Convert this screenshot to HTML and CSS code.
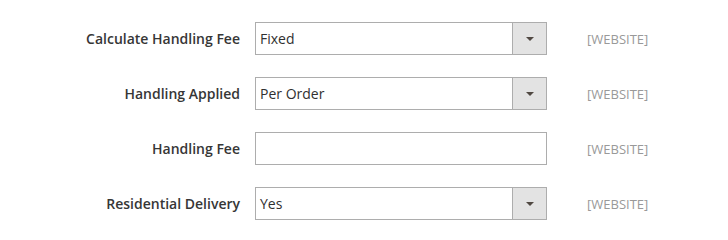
FILE: index.html
```html
<!DOCTYPE html>
<html>
<head>
<meta charset="utf-8">
<link rel="stylesheet" href="styles.css">
</head>
<body>
<div class="form">
  <div class="row">
    <label class="label">Calculate Handling Fee</label>
    <div class="control select"><span class="value">Fixed</span><span class="btn"><span class="arrow"></span></span></div>
    <span class="scope">[WEBSITE]</span>
  </div>
  <div class="row">
    <label class="label">Handling Applied</label>
    <div class="control select"><span class="value">Per Order</span><span class="btn"><span class="arrow"></span></span></div>
    <span class="scope">[WEBSITE]</span>
  </div>
  <div class="row">
    <label class="label">Handling Fee</label>
    <div class="control"><span class="value"></span></div>
    <span class="scope">[WEBSITE]</span>
  </div>
  <div class="row">
    <label class="label">Residential Delivery</label>
    <div class="control select"><span class="value">Yes</span><span class="btn"><span class="arrow"></span></span></div>
    <span class="scope">[WEBSITE]</span>
  </div>
</div>
</body>
</html>
```
FILE: styles.css
```css
html, body {
  margin: 0;
  padding: 0;
  background: #fff;
}
body {
  font-family: "Open Sans", sans-serif;
  color: #303030;
}
.form {
  padding-top: 22px;
  display: flex;
  flex-direction: column;
  gap: 22px;
}
.row {
  display: flex;
  align-items: center;
  height: 33px;
}
.label {
  text-align: right;
  font-size: 14px;
  font-weight: 600;
  color: #363636;
  padding-right: 15px;
  box-sizing: border-box;
  width: 255px;
}
.control {
  width: 292px;
  height: 33px;
  box-sizing: border-box;
  border: 1px solid #adadad;
  background: #fff;
  display: flex;
  align-items: stretch;
}
.value {
  flex: 1;
  font-size: 14px;
  line-height: 31px;
  padding-left: 4px;
  color: #303030;
}
.btn {
  width: 33px;
  background: #e3e3e3;
  border-left: 1px solid #adadad;
  display: flex;
  align-items: center;
  justify-content: center;
}
.arrow {
  width: 0;
  height: 0;
  border-left: 4px solid transparent;
  border-right: 4px solid transparent;
  border-top: 4px solid #514943;
}
.scope {
  margin-left: 40px;
  font-size: 13px;
  color: #999;
}
```
